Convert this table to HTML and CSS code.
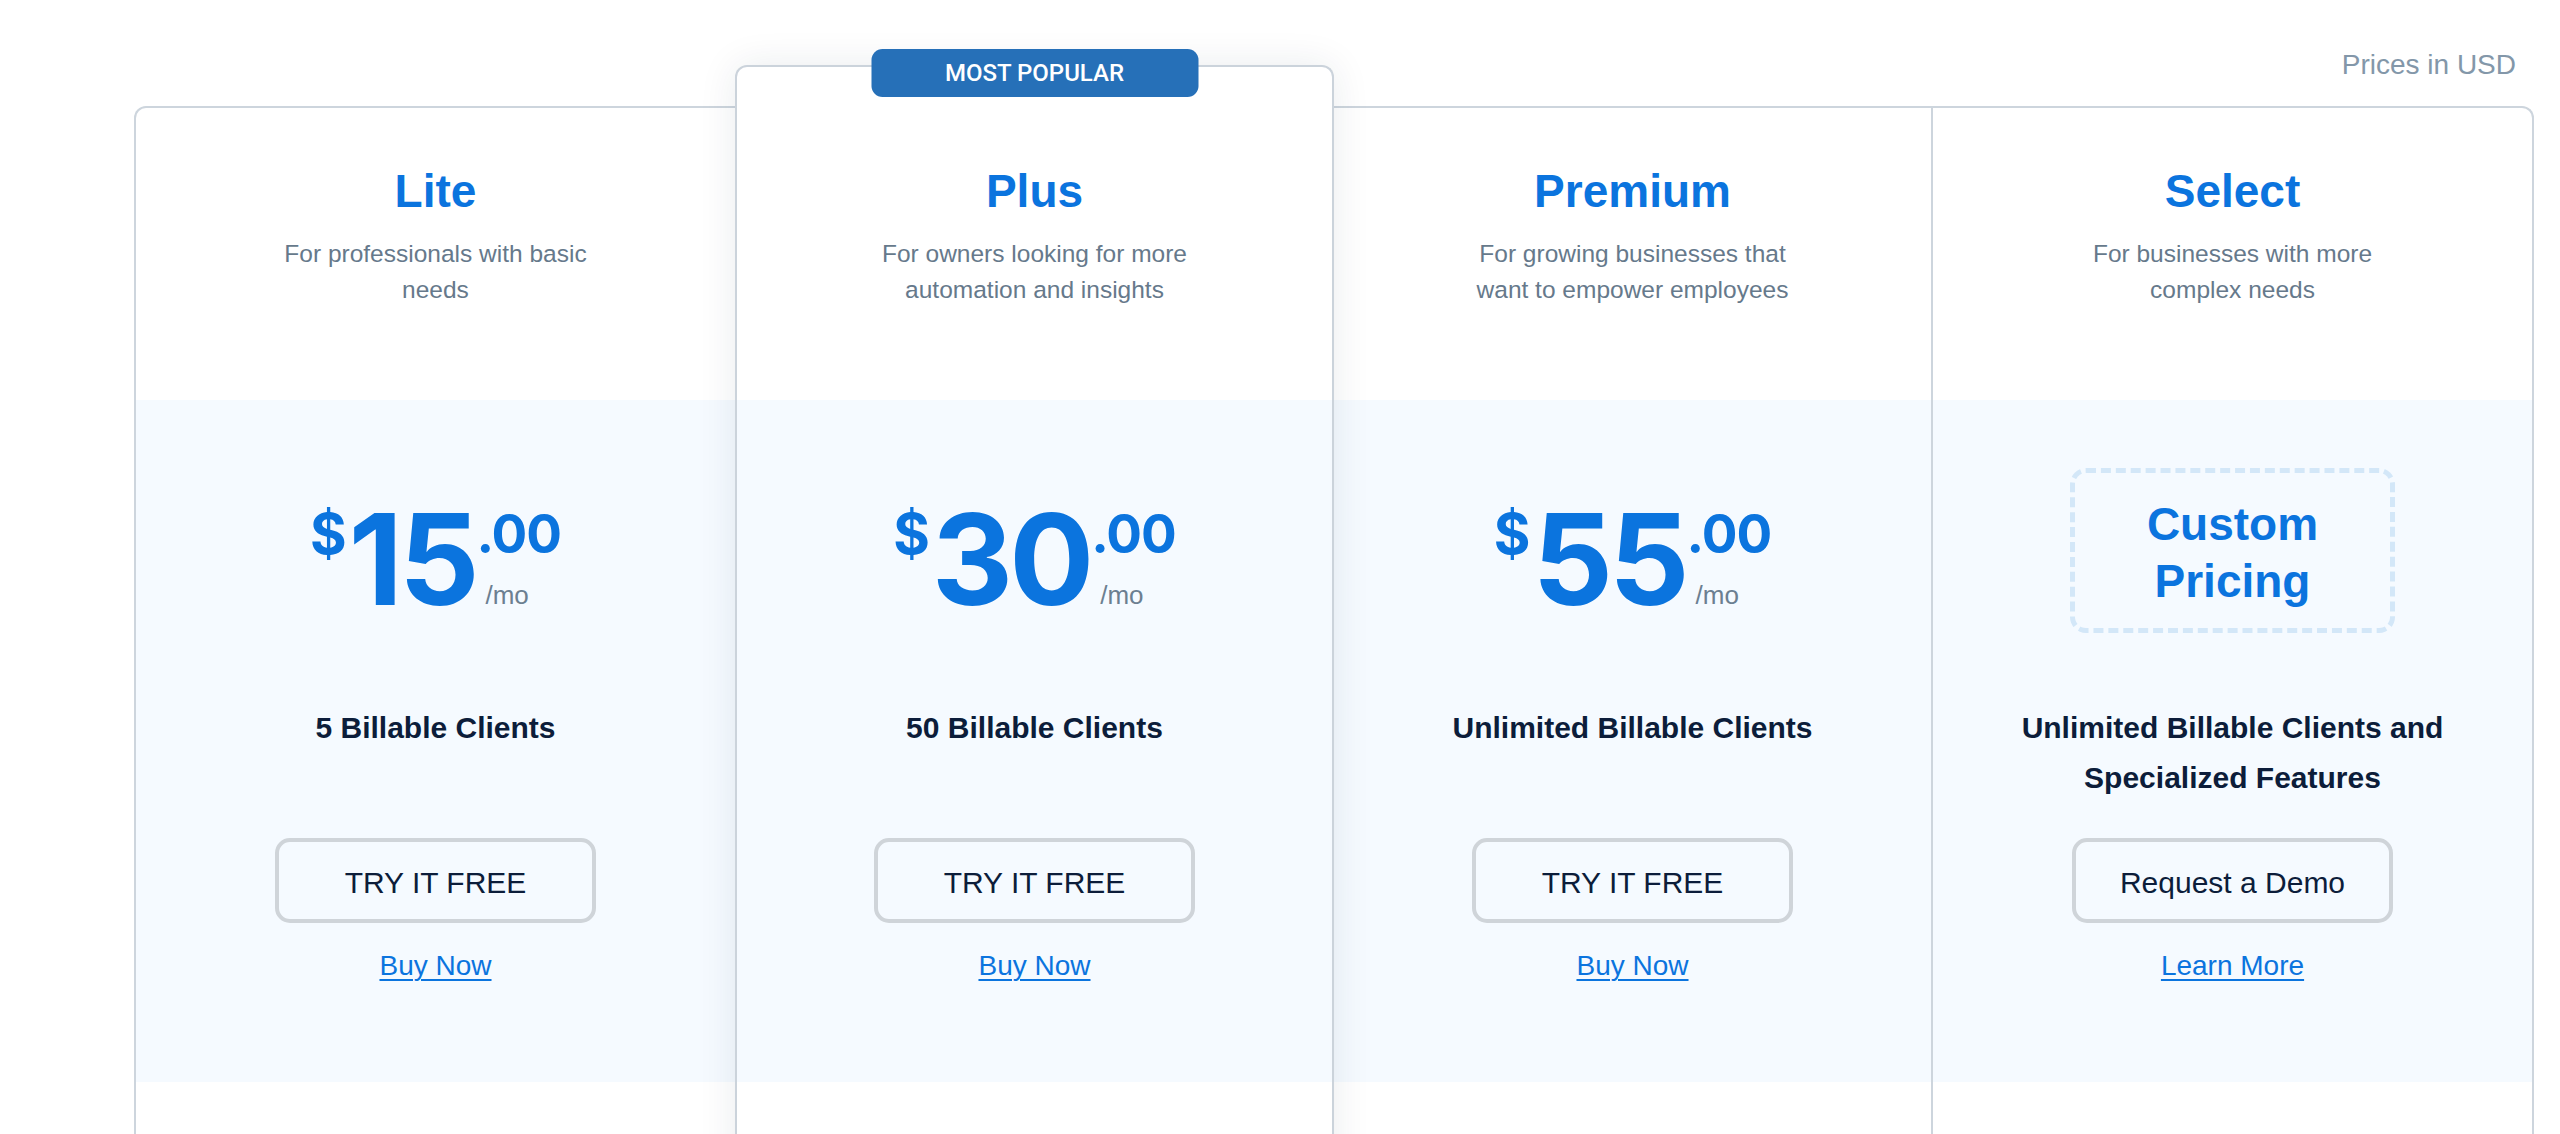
FILE: index.html
```html
<!DOCTYPE html>
<html lang="en">
<head>
<meta charset="utf-8">
<title>Pricing</title>
<link rel="stylesheet" href="styles.css">
</head>
<body>
<div class="page">
  <div class="topbar"><span class="currency-note">Prices in USD</span></div>
  <div class="plans">
    <div class="plan">
      <div class="plan-head">
        <h2 class="plan-name">Lite</h2>
        <p class="plan-desc">For professionals with basic needs</p>
      </div>
      <div class="plan-band">
        <div class="price-area">
          <div class="price"><span class="cur">$</span><span class="amt">15</span><span class="side"><span class="cents">.00</span><span class="per">/mo</span></span></div>
        </div>
        <div class="clients">5 Billable Clients</div>
        <a class="btn" href="#">TRY IT FREE</a>
        <a class="link" href="#">Buy Now</a>
      </div>
      <div class="plan-foot"></div>
    </div>

    <div class="plan featured">
      <div class="badge">MOST POPULAR</div>
      <div class="plan-head">
        <h2 class="plan-name">Plus</h2>
        <p class="plan-desc">For owners looking for more automation and insights</p>
      </div>
      <div class="plan-band">
        <div class="price-area">
          <div class="price"><span class="cur">$</span><span class="amt">30</span><span class="side"><span class="cents">.00</span><span class="per">/mo</span></span></div>
        </div>
        <div class="clients">50 Billable Clients</div>
        <a class="btn" href="#">TRY IT FREE</a>
        <a class="link" href="#">Buy Now</a>
      </div>
      <div class="plan-foot"></div>
    </div>

    <div class="plan premium">
      <div class="plan-head">
        <h2 class="plan-name">Premium</h2>
        <p class="plan-desc">For growing businesses that want to empower employees</p>
      </div>
      <div class="plan-band">
        <div class="price-area">
          <div class="price"><span class="cur">$</span><span class="amt">55</span><span class="side"><span class="cents">.00</span><span class="per">/mo</span></span></div>
        </div>
        <div class="clients">Unlimited Billable Clients</div>
        <a class="btn" href="#">TRY IT FREE</a>
        <a class="link" href="#">Buy Now</a>
      </div>
      <div class="plan-foot"></div>
    </div>

    <div class="plan">
      <div class="plan-head">
        <h2 class="plan-name">Select</h2>
        <p class="plan-desc">For businesses with more complex needs</p>
      </div>
      <div class="plan-band">
        <div class="price-area">
          <div class="custom">Custom<br>Pricing</div>
        </div>
        <div class="clients">Unlimited Billable Clients and Specialized Features</div>
        <a class="btn btn-demo" href="#">Request a Demo</a>
        <a class="link" href="#">Learn More</a>
      </div>
      <div class="plan-foot"></div>
    </div>
  </div>
</div>
</body>
</html>
```

FILE: styles.css
```css
html, body {
  margin: 0;
  background: #ffffff;
}

body {
  font-family: "Liberation Sans", Arial, sans-serif;
  color: #0c1d3a;
}

.page {
  width: 2400px;
  margin-left: 134px;
  padding-top: 45px;
}

.topbar {
  height: 40px;
  display: flex;
  justify-content: flex-end;
  padding-right: 18px;
  margin-bottom: 21px;
}

.currency-note {
  font-size: 28px;
  line-height: 40px;
  color: #8397a9;
}

.plans {
  display: grid;
  grid-template-columns: repeat(4, 1fr);
  border: 2px solid #cdd5dd;
  border-bottom: none;
  border-radius: 12px 12px 0 0;
}

.plan {
  position: relative;
  display: flex;
  flex-direction: column;
  text-align: center;
  min-width: 0;
}

.plan.premium {
  border-right: 2px solid #cdd5dd;
}

.plan.featured {
  margin-top: -43px;
  border: 2px solid #cbd3db;
  border-bottom: none;
  border-radius: 12px 12px 0 0;
  background: #ffffff;
  box-shadow: 0 0 38px rgba(20, 40, 70, 0.09);
  z-index: 1;
}

.badge {
  position: absolute;
  top: -18px;
  left: 50%;
  transform: translateX(-50%);
  width: 327px;
  height: 48px;
  border-radius: 11px;
  background: #2670b8;
  color: #ffffff;
  font-family: Roboto, "Liberation Sans", sans-serif;
  font-weight: 500;
  font-size: 24px;
  line-height: 48px;
  text-align: center;
}

.plan-head {
  height: 292px;
  padding-top: 55px;
  box-sizing: border-box;
}

.plan.featured .plan-head {
  height: 333px;
  padding-top: 96px;
}

.plan-name {
  margin: 0;
  font-size: 46px;
  line-height: 56px;
  font-weight: 700;
  color: #0b74de;
}

.plan-desc {
  margin: 17px auto 0;
  max-width: 350px;
  font-size: 24.5px;
  line-height: 36px;
  color: #66798b;
}

.plan-band {
  height: 682px;
  box-sizing: border-box;
  padding-top: 60px;
  background: #f5faff;
  display: flex;
  flex-direction: column;
  align-items: center;
}

.price-area {
  height: 243px;
  width: 100%;
  display: flex;
  justify-content: center;
  align-items: flex-start;
}

.price {
  display: flex;
  align-items: flex-start;
  margin-top: 36px;
  font-family: Inter, "Liberation Sans", sans-serif;
  font-weight: 700;
  color: #0b74de;
}

.cur {
  font-size: 56px;
  line-height: 1;
  margin-top: 10px;
  margin-right: 2px;
}

.amt {
  font-size: 126px;
  line-height: 1;
  letter-spacing: -4px;
}

.side {
  display: flex;
  flex-direction: column;
  align-items: flex-start;
  margin-left: 1px;
}

.cents {
  font-size: 53px;
  line-height: 1;
  margin-top: 12px;
  letter-spacing: -1px;
}

.per {
  margin-top: 21px;
  margin-left: 9px;
  font-family: "Liberation Sans", Arial, sans-serif;
  font-weight: 400;
  font-size: 26px;
  line-height: 1;
  color: #6c7f91;
}

.custom {
  margin-top: 8px;
  width: 325px;
  height: 165px;
  box-sizing: border-box;
  padding-top: 4px;
  border: 5px dashed #d3e7f8;
  border-radius: 16px;
  display: flex;
  align-items: center;
  justify-content: center;
  font-size: 46px;
  line-height: 57px;
  font-weight: 700;
  color: #0b74de;
}

.clients {
  height: 100px;
  max-width: 500px;
  font-size: 30px;
  line-height: 50px;
  font-weight: 700;
  color: #0c1d3a;
}

.btn {
  margin-top: 35px;
  width: 321px;
  height: 85px;
  box-sizing: border-box;
  padding-top: 4px;
  border: 4px solid #cfd4d9;
  border-radius: 15px;
  display: flex;
  align-items: center;
  justify-content: center;
  font-size: 30px;
  color: #0c1d3a;
  text-decoration: none;
}

.link {
  margin-top: 23px;
  font-size: 28px;
  line-height: 40px;
  color: #0b74de;
  text-decoration: underline;
  text-decoration-thickness: 2px;
  text-underline-offset: 4px;
}

.plan-foot {
  height: 200px;
}
```
